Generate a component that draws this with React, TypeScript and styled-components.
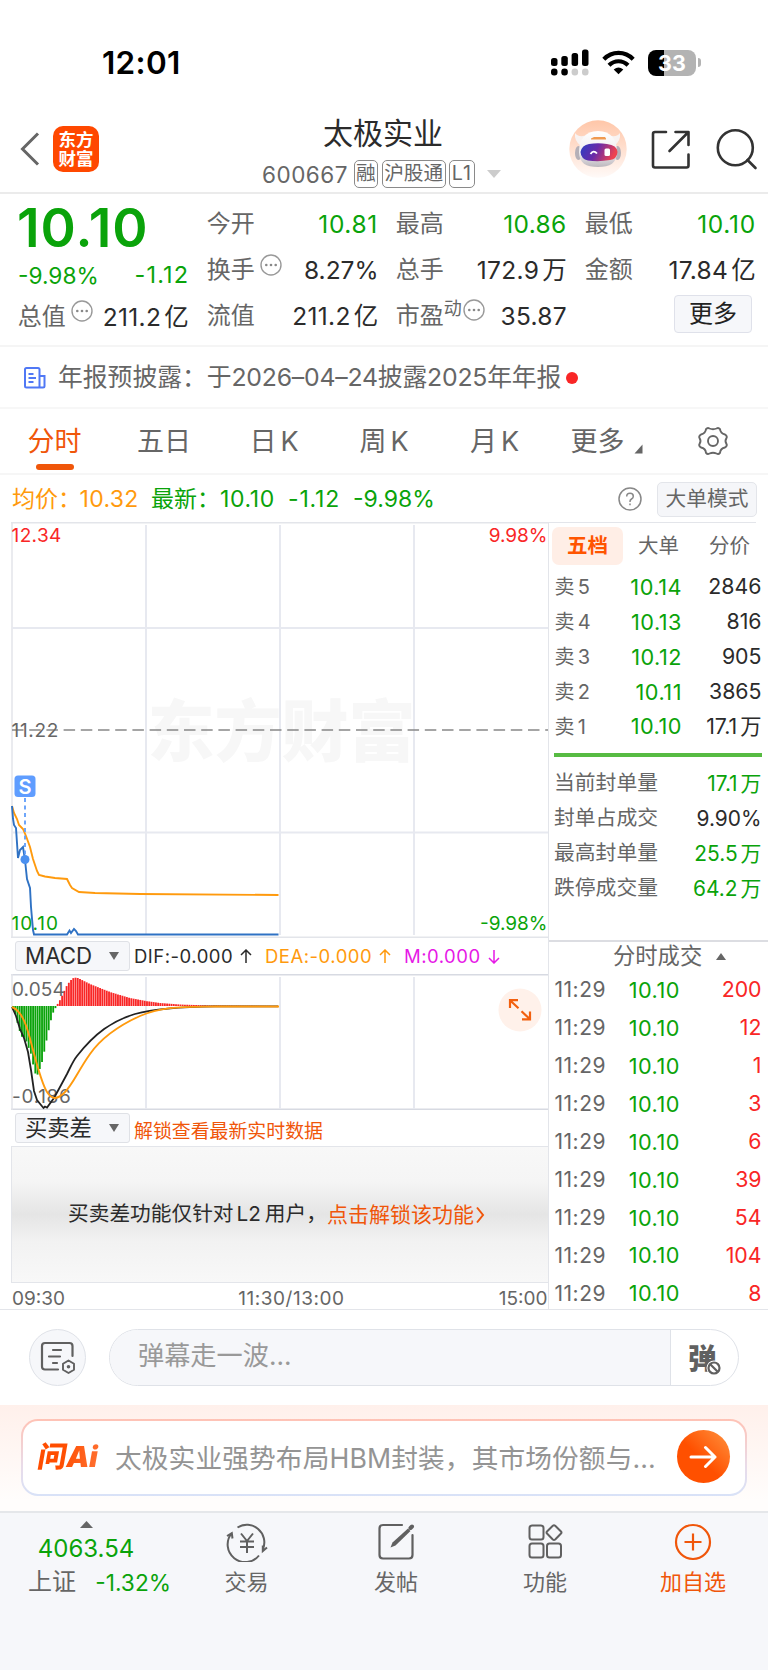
import React from "react";
import styled, { createGlobalStyle } from "styled-components";

const GREEN = "#0aa30a";
const RED = "#f92626";
const ORANGE = "#f0560a";
const AMBER = "#ff9a0d";
const DARK = "#2b2b2b";
const GRAY = "#666";
const LINE = "#e3e5ea";

const GlobalStyle = createGlobalStyle`
  * { box-sizing: border-box; }
  body { margin: 0; background: #fff; }
  body, text { font-family: Inter, "Noto Sans CJK SC", sans-serif; }
`;

const Page = styled.div`
  width: 768px;
  height: 1670px;
  overflow: hidden;
  background: #fff;
  color: ${GRAY};
  display: flex;
  flex-direction: column;
  white-space: nowrap;
`;

interface TxtProps {
  $size: number;
  $color?: string;
  $weight?: number;
  $ls?: number;
}
const Txt = styled.span<TxtProps>`
  font-size: ${(p) => p.$size}px;
  color: ${(p) => p.$color || GRAY};
  font-weight: ${(p) => p.$weight || 400};
  letter-spacing: ${(p) => p.$ls || 0}px;
  margin-right: ${(p) => -(p.$ls || 0)}px;
  line-height: 1.2;
`;
const Unit = styled.span`
  margin-left: 3px;
`;

/* status bar */
const StatusBar = styled.div`
  height: 100px;
  padding: 25px 67px 0 102px;
  display: flex;
  align-items: center;
  justify-content: space-between;
`;
const StatusIcons = styled.div`
  display: flex;
  align-items: center;
  gap: 13px;
`;
const Battery = styled.div`
  width: 48px;
  height: 26px;
  border-radius: 8px;
  background: linear-gradient(90deg, #000 34%, #b3b3b3 34%);
  color: #fff;
  font-size: 21.5px;
  font-weight: 700;
  line-height: 26px;
  text-align: center;
`;
const BatteryGroup = styled.div`
  display: flex;
  align-items: center;
  gap: 2px;
`;
const Nub = styled.div`
  width: 3px;
  height: 9px;
  border-radius: 0 4px 4px 0;
  background: #b3b3b3;
`;

/* title bar */
const Header = styled.header`
  height: 94px;
  border-bottom: 2px solid #ebebeb;
  display: grid;
  grid-template-columns: 262px 1fr 199px;
`;
const HeaderLeft = styled.div`
  display: flex;
  align-items: center;
  gap: 13.5px;
  padding: 6px 0 0 19.5px;
`;
const Logo = styled.div`
  width: 46px;
  height: 46px;
  border-radius: 10px;
  background: #ff4800;
  color: #fff;
  font-size: 17.5px;
  font-weight: 700;
  line-height: 19px;
  padding-top: 4px;
  text-align: center;
  white-space: normal;
`;
const TitleBlock = styled.div`
  display: flex;
  flex-direction: column;
  padding-top: 15px;
`;
const StockName = styled.div`
  font-size: 30px;
  line-height: 36px;
  color: ${DARK};
  padding-left: 61px;
`;
const CodeRow = styled.div`
  display: flex;
  align-items: center;
  gap: 3.5px;
  height: 28px;
  margin-top: 9px;
`;
const Code = styled.span`
  font-size: 22.5px;
  letter-spacing: 0.5px;
  width: 88px;
`;
const Tag = styled.span<{ $ls?: number }>`
  height: 28px;
  padding: 0 1.5px;
  border: 1.5px solid #8a8a8a;
  border-radius: 5px;
  font-size: 19.7px;
  line-height: 25px;
  letter-spacing: ${(p) => p.$ls || 0}px;
`;
const TagArrow = styled.span`
  display: flex;
  margin-left: 8.5px;
`;
const HeaderRight = styled.div`
  display: flex;
  align-items: center;
  padding: 6px 0 0 0;
`;

/* quotes */
const Quote = styled.section`
  height: 153px;
  padding: 7px 13px 0 18px;
  display: grid;
  grid-template-columns: repeat(4, 170px);
  column-gap: 19px;
  border-bottom: 2px solid #f5f5f5;
`;
const QuoteCol = styled.div`
  display: flex;
  flex-direction: column;
`;
const QuoteRow = styled.div<{ $h?: number }>`
  height: ${(p) => p.$h || 46}px;
  display: flex;
  align-items: center;
  justify-content: space-between;
`;
const Price = styled.div`
  height: 56px;
  margin-left: -1px;
  font-size: 53.5px;
  line-height: 53px;
  font-weight: 600;
  color: ${GREEN};
  letter-spacing: 1px;
`;
const Label = styled.span`
  display: flex;
  align-items: center;
  margin-left: -0.3px;
  font-size: 24px;
  color: ${GRAY};
  line-height: 30px;
`;
const Value = styled.span<{ $color?: string; $shift?: number; $ls?: number }>`
  font-size: 24.5px;
  letter-spacing: ${(p) => p.$ls ?? 0.3}px;
  line-height: 30px;
  margin-right: ${(p) => -(p.$shift || 0)}px;
  color: ${(p) => p.$color || DARK};
`;
const Sup = styled.span`
  font-size: 18px;
  line-height: 20px;
  margin-bottom: 14px;
`;
const MoreBtn = styled.button`
  width: 78px;
  height: 38px;
  margin: 0 3px 0 auto;
  padding: 0;
  border: 1.5px solid #dfe1ea;
  border-radius: 4px;
  background: #f6f7fa;
  font: 24px/36px Inter, "Noto Sans CJK SC", sans-serif;
  color: #222;
`;
const DotsWrap = styled.span<{ $ml: number }>`
  display: flex;
  margin: 0 0 11px ${(p) => p.$ml}px;
`;

const Notice = styled.div`
  height: 62px;
  padding: 1px 0 0 23px;
  display: flex;
  align-items: center;
  border-bottom: 2px solid #f7f7f7;
`;
const RedDot = styled.i`
  width: 12px;
  height: 12px;
  border-radius: 50%;
  background: ${RED};
  margin-left: 5px;
`;

/* period tabs */
const Tabs = styled.nav`
  height: 66px;
  border-bottom: 2px solid #f6f6f6;
  display: grid;
  grid-template-columns: 109px 110px 110px 110px 111px 108px 1fr;
`;
const Tab = styled.div<{ $on?: boolean }>`
  display: flex;
  flex-direction: column;
  align-items: center;
  padding-top: 16px;
  font-size: 27px;
  line-height: 34px;
  word-spacing: -3.5px;
  color: ${(p) => (p.$on ? ORANGE : GRAY)};
`;
const Underline = styled.i`
  width: 38px;
  height: 6px;
  margin-top: 5px;
  border-radius: 3px;
  background: ${ORANGE};
`;
const TabMore = styled.span`
  display: flex;
  align-items: flex-end;
  gap: 9px;
  padding-left: 5px;
`;

const Summary = styled.div`
  height: 47px;
  padding: 1px 11px 0 12px;
  display: flex;
  align-items: center;
`;
const SummaryText = styled.div`
  display: flex;
  flex: 1;
  align-items: baseline;
`;
const Cell = styled.span<{ $w: number; $color: string; $ls?: number }>`
  width: ${(p) => p.$w}px;
  color: ${(p) => p.$color};
  letter-spacing: ${(p) => p.$ls || 0}px;
  font-size: 23px;
  line-height: 30px;
`;
const ModeBtn = styled.div`
  width: 100px;
  height: 35px;
  margin-left: 15px;
  border: 1.5px solid ${LINE};
  border-radius: 5px;
  background: #f5f6f9;
  font-size: 20.7px;
  line-height: 32px;
  text-align: center;
`;

/* chart area */
const Main = styled.div`
  height: 788px;
  display: grid;
  grid-template-columns: 549px minmax(0, 1fr);
  grid-template-rows: 786.5px;
  border-bottom: 1.5px solid ${LINE};
`;
const Charts = styled.div`
  padding-left: 11px;
  border-right: 1.5px solid ${LINE};
  display: flex;
  flex-direction: column;
`;
const ChartSvg = styled.svg`
  display: block;
  flex: none;
`;
const IndicatorRow = styled.div`
  height: 36px;
  flex: none;
  padding-left: 4px;
  display: flex;
  align-items: center;
`;
const Picker = styled.div`
  width: 115px;
  height: 30px;
  margin-right: 4px;
  padding: 0 10px 0 9px;
  display: flex;
  align-items: center;
  justify-content: space-between;
  border: 1.5px solid #dfe1e6;
  border-radius: 3px;
  background: #f6f7fa;
  color: ${DARK};
  font-size: 22.3px;
  line-height: 26px;
`;
const Readout = styled.span<{ $w: number; $color: string }>`
  width: ${(p) => p.$w}px;
  display: flex;
  align-items: center;
  gap: 7px;
  color: ${(p) => p.$color};
  font-size: 18.5px;
  letter-spacing: 0.5px;
`;
const UnlockNote = styled.span`
  padding-top: 2px;
  font-size: 18.9px;
  color: ${ORANGE};
`;
const Locked = styled.div`
  height: 137px;
  flex: none;
  border: solid ${LINE};
  border-width: 1.5px 0 1.5px 1.5px;
  padding: 0 0 0 56px;
  display: flex;
  align-items: center;
  background: linear-gradient(180deg, #f8f8f8 0%, #f5f5f5 25%, #e5e5e5 50%, #f2f2f2 70%, #f8f8f8 100%);
`;
const InlineGap = styled.span`
  margin: 0 4px 0 3px;
`;
const TimeAxis = styled.div`
  flex: 1;
  display: flex;
  align-items: center;
  justify-content: space-between;
  font-size: 19px;
  padding: 4px 0.5px 0 1px;
`;
const MidTime = styled.span`
  padding-left: 19px;
  letter-spacing: 0.55px;
`;

/* order book */
const Side = styled.aside`
  display: flex;
  flex-direction: column;
`;
const SideTabs = styled.div`
  height: 47.5px;
  flex: none;
  margin-right: 12px;
  padding: 4px 0 0 3px;
  border-top: 1.5px solid ${LINE};
  display: flex;
`;
const SideTab = styled.div<{ $on?: boolean }>`
  width: 71px;
  height: 38px;
  flex: none;
  border-radius: 7px;
  background: ${(p) => (p.$on ? "#ffeee6" : "none")};
  color: ${(p) => (p.$on ? "#ff5500" : GRAY)};
  font-weight: ${(p) => (p.$on ? 700 : 400)};
  font-size: 20.5px;
  line-height: 37px;
  text-align: center;
`;
const Row = styled.div<{ $h: number; $pl?: number }>`
  height: ${(p) => p.$h}px;
  flex: none;
  padding: 0 6.5px 0 5.5px;
  display: grid;
  grid-template-columns: ${(p) => p.$pl || 127}px 1fr;
  align-items: center;
  justify-items: end;
  word-spacing: -2.5px;
`;
const RowLeft = styled.div`
  width: 100%;
  display: flex;
  align-items: center;
  justify-content: space-between;
`;
const StatRow = styled.div`
  height: 35px;
  flex: none;
  padding: 0 6.5px 0 5px;
  display: flex;
  align-items: center;
  justify-content: space-between;
`;
const GreenBar = styled.div`
  height: 4px;
  flex: none;
  margin: 9.5px 6px 8.5px 5px;
  background: #57bb42;
`;
const TradesHead = styled.div`
  height: 31px;
  flex: none;
  margin-top: 34px;
  padding-left: 64px;
  display: flex;
  align-items: center;
  gap: 14px;
  border-top: 2px solid #dcdde2;
`;

/* comment bar */
const Danmu = styled.div`
  height: 95px;
  padding: 0 29px;
  display: flex;
  align-items: center;
  gap: 23px;
`;
const RoundBtn = styled.div`
  width: 57px;
  height: 57px;
  border: 1.5px solid #dfe2e8;
  border-radius: 50%;
  background: #f6f7fa;
  display: flex;
  align-items: center;
  justify-content: center;
`;
const InputBox = styled.div`
  width: 630px;
  height: 57px;
  border: 1.5px solid #dfe2e8;
  border-radius: 29px;
  overflow: hidden;
  display: flex;
`;
const Placeholder = styled.div`
  width: 561px;
  padding-left: 28px;
  background: #f6f7fa;
  border-right: 1.5px solid #dfe2e8;
  color: #999;
  font-size: 26.2px;
  line-height: 52px;
`;
const DanToggle = styled.div`
  position: relative;
  padding-left: 17px;
  color: #606060;
  font-size: 28.5px;
  font-weight: 900;
  line-height: 57px;
`;
const Ban = styled.svg`
  position: absolute;
  left: 35px;
  top: 30px;
`;

/* AI prompt */
const AiSection = styled.div`
  height: 106px;
  padding: 14px 21px 0;
  background: linear-gradient(180deg, #fff0eb, #fffdfc 90%);
`;
const AiCard = styled.div`
  height: 77px;
  padding: 0 15.5px 2px 16px;
  border: 2.5px solid transparent;
  border-radius: 17px;
  background:
    linear-gradient(#fff, #fff) padding-box,
    linear-gradient(180deg, #ffc2b5, #e9dbe8 60%, #d8e2f8) border-box;
  display: flex;
  align-items: center;
`;
const AiLogo = styled.div`
  width: 76px;
  margin-left: -1px;
  padding-right: 1px;
  font-size: 29px;
  font-weight: 900;
  letter-spacing: -0.3px;
  transform: skewX(-10deg);
  line-height: 40px;
  background: linear-gradient(90deg, #ff4d00 30%, #ff8148 80px);
  background-clip: text;
  -webkit-background-clip: text;
  color: transparent;
`;
const AiText = styled.div`
  flex: 1;
  padding-left: 1px;
  color: #949494;
  font-size: 26.7px;
  letter-spacing: 0.12px;
`;
const Go = styled.div`
  width: 53px;
  height: 53px;
  flex: none;
  border-radius: 50%;
  background: linear-gradient(45deg, #ff5000 45%, #ff9440);
  display: flex;
  align-items: center;
  justify-content: center;
`;

/* bottom bar */
const Footer = styled.footer`
  flex: 1;
  background: #f6f7fa;
  border-top: 2px solid #e5e7ea;
  display: grid;
  grid-template-columns: 172px 149px 150px 148px 1fr;
  padding-right: 1px;
`;
const IndexBlock = styled.div`
  display: flex;
  flex-direction: column;
  align-items: center;
  padding-top: 7.5px;
`;
const IndexValue = styled.div`
  font-size: 24px;
  line-height: 30px;
  margin-top: 6px;
  color: ${GREEN};
`;
const IndexLine = styled.div`
  width: 143px;
  display: flex;
  align-items: center;
  justify-content: space-between;
  height: 38px;
  margin-left: 27px;
`;
const Nav = styled.div<{ $color?: string }>`
  display: flex;
  flex-direction: column;
  align-items: center;
  padding-top: 9px;
  font-size: 22px;
  line-height: 30px;
  gap: 5px;
  color: ${(p) => p.$color || GRAY};
`;

/* a figure followed by its CJK unit, with a narrow gap between them */
const Amount = ({ text }: { text: string }) => {
  const m = text.match(/^(.*?)([亿万])$/);
  return m ? (
    <>
      {m[1]}
      <Unit>{m[2]}</Unit>
    </>
  ) : (
    <>{text}</>
  );
};

const Dots = ({ ml }: { ml: number }) => (
  <DotsWrap $ml={ml}>
    <svg width="22" height="22" viewBox="0 0 22 22" fill="none" stroke="#999" strokeWidth="1.4">
      <circle cx="11" cy="11" r="10" />
      <g fill="#888" stroke="none">
        <circle cx="6.3" cy="11" r="1.3" />
        <circle cx="11" cy="11" r="1.3" />
        <circle cx="15.7" cy="11" r="1.3" />
      </g>
    </svg>
  </DotsWrap>
);

const Tri = ({ up, w = 10, h = 8, c = GRAY }: { up?: boolean; w?: number; h?: number; c?: string }) => (
  <svg width={w} height={h} viewBox="0 0 10 8" preserveAspectRatio="none">
    <path d={up ? "M0 8L5 0L10 8Z" : "M0 0H10L5 8Z"} fill={c} />
  </svg>
);

const Arrow = ({ down }: { down?: boolean }) => (
  <svg width="12" height="15" viewBox="0 0 12 15" fill="none" stroke="currentColor" strokeWidth="1.5">
    <path d={down ? "M6 1V14M1 9L6 14L11 9" : "M6 14V1M1 6L6 1L11 6"} />
  </svg>
);

const Robot = () => (
  <svg width="58" height="58" viewBox="0 0 58 58">
    <defs>
      <linearGradient id="halo" x1="0" y1="0" x2="0" y2="1">
        <stop offset="0" stopColor="#ffc6a8" />
        <stop offset="0.6" stopColor="#ffe5d8" />
        <stop offset="1" stopColor="#fffaf8" />
      </linearGradient>
      <linearGradient id="visor" x1="0" y1="0" x2="1" y2="0.25">
        <stop offset="0" stopColor="#2a3fc4" />
        <stop offset="0.5" stopColor="#6a2aa8" />
        <stop offset="1" stopColor="#ee4250" />
      </linearGradient>
      <linearGradient id="helmet" x1="0" y1="0" x2="0" y2="1">
        <stop offset="0" stopColor="#fff" />
        <stop offset="0.6" stopColor="#efedf0" />
        <stop offset="1" stopColor="#bdb8be" />
      </linearGradient>
    </defs>
    <circle cx="29" cy="29" r="28.7" fill="url(#halo)" />
    <path d="M6 13Q5 21 12 26L19 15Q9 18 6 13ZM51 13Q52 21 45 26L38 15Q48 18 51 13Z" fill="#f8f3f2" />
    <ellipse cx="9.5" cy="33" rx="3.5" ry="7" fill="#b5b0b8" />
    <ellipse cx="48.5" cy="33" rx="3.5" ry="7" fill="#b5b0b8" />
    <path d="M29 11C42 11 48 20 48 32C48 43 41 47 29 47C17 47 10 43 10 32C10 20 16 11 29 11Z" fill="url(#helmet)" />
    <path d="M22 18.5L25 17H36L37 18.5V19.5H22Z" fill="#f09a50" />
    <path d="M20 24Q29 22.500 38 24Q48 25 48.500 32Q48 39 41 40Q30 42 19 40.500Q12 39 11.500 32Q13 25 20 24Z" fill="url(#visor)" />
    <path d="M21.500 34Q24.500 29.500 28 33.500" fill="none" stroke="#fff" strokeWidth="1.8" />
    <rect x="35.500" y="28.500" width="5.500" height="7.500" rx="1.500" fill="#fff" />
  </svg>
);

const deltaPoints: [number, number][] = [
  [12, 1008], [15, 1013], [18, 1025], [20, 1032], [22, 1037], [25, 1038], [27, 1043], [29, 1049], [31, 1054],
  [33, 1064], [35, 1073], [37, 1076], [39, 1071], [41, 1066], [43, 1058], [45, 1048], [47, 1038], [49, 1029],
  [51, 1020], [53, 1013], [56, 1007], [57, 1005], [60, 1000], [63, 994], [66, 987], [70, 981], [74, 977.5],
  [78, 978], [82, 980], [90, 984], [100, 988], [110, 992], [120, 995], [130, 998], [146, 1001], [160, 1003],
  [180, 1004.500], [210, 1005.500], [279, 1006],
];
const barAt = (x: number) => {
  for (let i = 1; i < deltaPoints.length; i++) {
    const [x0, y0] = deltaPoints[i - 1];
    const [x1, y1] = deltaPoints[i];
    if (x <= x1) return y0 + ((y1 - y0) * (x - x0)) / (x1 - x0);
  }
  return 1006;
};
const bars = Array.from({ length: 119 }, (_, i) => {
  const x = 13 + i * 2.233;
  return { x, y: barAt(x) };
});

const asks = [
  ["5", "10.14", "2846"],
  ["4", "10.13", "816"],
  ["3", "10.12", "905"],
  ["2", "10.11", "3865"],
  ["1", "10.10", "17.1万"],
];
const stats = [
  ["当前封单量", "17.1万", GREEN],
  ["封单占成交", "9.90%", DARK],
  ["最高封单量", "25.5万", GREEN],
  ["跌停成交量", "64.2万", GREEN],
];
const trades = ["200", "12", "1", "3", "6", "39", "54", "104", "8"];

const PriceChart = () => (
  <ChartSvg width="537" height="416" viewBox="11 522 537 416" fill="none">
    <text x="147.500" y="755.500" fontSize="67" fontWeight="900" fill="#f7f7f7">东方财富</text>
    <g stroke="#e7e9f0" strokeWidth="1.5">
      <path d="M11 522.700H548M11 937.300H548" stroke={LINE} />
      <path d="M12 522V938" stroke={LINE} />
      <path d="M146 525V935M280 525V935M414 525V935" strokeWidth="2" />
      <path d="M12 628H548M12 832.500H548" strokeWidth="1.8" />
    </g>
    <path d="M12 730H548" stroke="#888" strokeWidth="1.700" strokeDasharray="11.500 5.700" />
    <g fontSize="19">
      <text x="11.500" y="541.500" fill={RED} letterSpacing="0.400">12.34</text>
      <text x="547.500" y="541.500" fill={RED} textAnchor="end">9.98%</text>
      <text x="11.500" y="736.500" fill={GRAY} letterSpacing="0.700">11.22</text>
      <text x="11.500" y="930" fill={GREEN} letterSpacing="0.900">10.10</text>
      <text x="547.500" y="930" fill={GREEN} textAnchor="end">-9.98%</text>
    </g>
    <path d="M12 806L14 813L17 819L19 825L23 829L26 836L30 847L33 859L37 871L39 875L45 876.500L55 878L67 879L70 885L72 888L79 892L95 893L140 894L278.500 895" stroke={AMBER} strokeWidth="1.900" />
    <path d="M12 806L13 819L14 825L16 828L18 858L20 850L23 847L25 860L27 879L30 888L31 907L33 930L34 934.500L67 934.500L69.500 930.500L71 933L74 929L76 931L78 934.500H278.500" stroke="#2f72c4" strokeWidth="1.900" />
    <path d="M25 798V856" stroke="#5f9dfa" strokeWidth="1.800" strokeDasharray="4 3.500" />
    <circle cx="25" cy="859.500" r="4.500" fill="#4a90f0" />
    <rect x="14.500" y="775.500" width="21" height="21.500" rx="3.500" fill="#5f9dff" />
    <text x="25" y="793.500" fontSize="20" fontWeight="600" fill="#fff" textAnchor="middle">S</text>
  </ChartSvg>
);

const MacdChart = () => (
  <ChartSvg width="537" height="136" viewBox="11 974 537 136" fill="none">
    <path d="M11 974.700H548M11 1109.300H548" stroke="#d7dae2" strokeWidth="1.500" />
    <path d="M12 974V1110" stroke={LINE} strokeWidth="1.500" />
    <path d="M146 977V1109M280 977V1109M414 977V1109" stroke="#e7e9f0" strokeWidth="2" />
    {bars.map((b) => (
      <path key={b.x} d={`M${b.x} 1006V${b.y}`} stroke={b.y > 1006 ? "#0aa30a" : RED} strokeWidth="1.850" />
    ))}
    <text x="12" y="995.500" fontSize="19" fill={GRAY} letterSpacing="0.100">0.054</text>
    <text x="12" y="1102.500" fontSize="19" fill={GRAY} letterSpacing="0.700">-0.186</text>
    <path d="M12 1007L16 1016L20 1029L24 1038L28 1052L31 1070L34 1091L37 1100L41 1105L43.500 1108L45 1106.500L47 1107.500L54 1098L60 1087L67 1074C71 1066 73 1061 77 1056C95 1033 112 1021 135 1014C155 1008.500 180 1006.700 215 1006.300H278" stroke="#222" strokeWidth="1.800" />
    <path d="M12 1007C24 1012 28 1031 33 1050S42 1084 47 1092S57 1100 65 1092S78 1071 90 1054S118 1026 140 1016S185 1007 215 1006.500H279" stroke={AMBER} strokeWidth="1.900" />
    <circle cx="520" cy="1010" r="21.500" fill="#fff1ea" />
    <path d="M510 1008V1000.200H518M510.500 1000.700L518.500 1008.200M530 1011.500V1019.300H522M529.500 1018.800L521.500 1011.300" stroke="#f2600f" strokeWidth="2.200" />
  </ChartSvg>
);

export default function App() {
  return (
    <Page>
      <GlobalStyle />
      <StatusBar>
        <Txt $size={31.500} $color="#000" $weight={600} $ls={0.300}>12:01</Txt>
        <StatusIcons>
          <svg width="38" height="27" viewBox="0 0 38 27">
            <g fill="#000">
              <rect x="0" y="9" width="6.500" height="8" rx="2.500" />
              <rect x="10.300" y="7" width="6.500" height="10" rx="2.500" />
              <rect x="20.600" y="4" width="6.500" height="13" rx="2.500" />
              <rect x="31" y="0.500" width="6.500" height="16.500" rx="2.500" />
              <rect x="0" y="19.500" width="6.500" height="7" rx="3" />
              <rect x="10.300" y="19.500" width="6.500" height="7" rx="3" />
            </g>
            <rect x="20.600" y="19.500" width="6.500" height="7" rx="3" fill="#ccc" />
            <rect x="31" y="19.500" width="6.500" height="7" rx="3" fill="#ccc" />
          </svg>
          <svg width="33" height="25" viewBox="0 0 33 25" fill="none" stroke="#000" strokeWidth="4.200">
            <path d="M1.800 9.200C10 0.800 23 0.800 31.200 9.200" />
            <path d="M7 15.200C12.500 9.900 20.500 9.900 26 15.200" />
            <path d="M11.700 19.500Q16.500 15.500 21.300 19.500L16.500 24.300Z" fill="#000" stroke="none" />
          </svg>
          <BatteryGroup>
            <Battery>33</Battery>
            <Nub />
          </BatteryGroup>
        </StatusIcons>
      </StatusBar>

      <Header>
        <HeaderLeft>
          <svg width="20" height="34" viewBox="0 0 20 34" fill="none" stroke="#666" strokeWidth="3">
            <path d="M18 1.500L2.500 17L18 32.500" />
          </svg>
          <Logo>东方<br />财富</Logo>
        </HeaderLeft>
        <TitleBlock>
          <StockName>太极实业</StockName>
          <CodeRow>
            <Code>600667</Code>
            <Tag>融</Tag>
            <Tag>沪股通</Tag>
            <Tag $ls={1}>L1</Tag>
            <TagArrow><Tri w={14} h={8} c="#ccc" /></TagArrow>
          </CodeRow>
        </TitleBlock>
        <HeaderRight>
          <Robot />
          <svg width="141" height="58" viewBox="627 120 141 58" fill="none" stroke="#333" strokeWidth="2.600" strokeLinecap="round" strokeLinejoin="round">
            <path d="M666 132H655Q653 132 653 134V165.500Q653 167.500 655 167.500H686.500Q688.500 167.500 688.500 165.500V154.500M675.500 132H688.500V145M688 132.500L669.500 151" />
            <circle cx="735.300" cy="147.800" r="17.500" />
            <path d="M747.500 160L755.500 168" />
          </svg>
        </HeaderRight>
      </Header>

      <Quote>
        <QuoteCol>
          <Price>10.10</Price>
          <QuoteRow $h={37}>
            <Txt $size={22.700} $color={GREEN}>-9.98%</Txt>
            <Txt $size={23.500} $color={GREEN} $ls={1.100}>-1.12</Txt>
          </QuoteRow>
          <QuoteRow $h={45}>
            <Label>总值<Dots ml={5} /></Label>
            <Value $shift={1}><Amount text="211.2亿" /></Value>
          </QuoteRow>
        </QuoteCol>
        <QuoteCol>
          <QuoteRow>
            <Label>今开</Label>
            <Value $color={GREEN} $shift={0.800} $ls={0.600}>10.81</Value>
          </QuoteRow>
          <QuoteRow>
            <Label>换手<Dots ml={5} /></Label>
            <Value $shift={1.500} $ls={0}>8.27%</Value>
          </QuoteRow>
          <QuoteRow $h={45}>
            <Label>流值</Label>
            <Value $shift={1.500}><Amount text="211.2亿" /></Value>
          </QuoteRow>
        </QuoteCol>
        <QuoteCol>
          <QuoteRow>
            <Label>最高</Label>
            <Value $color={GREEN} $shift={0.500}>10.86</Value>
          </QuoteRow>
          <QuoteRow>
            <Label>总手</Label>
            <Value $shift={1}><Amount text="172.9万" /></Value>
          </QuoteRow>
          <QuoteRow $h={45}>
            <Label>市盈<Sup>动</Sup><Dots ml={1} /></Label>
            <Value $shift={1}>35.87</Value>
          </QuoteRow>
        </QuoteCol>
        <QuoteCol>
          <QuoteRow>
            <Label>最低</Label>
            <Value $color={GREEN} $shift={0.800} $ls={0.700}>10.10</Value>
          </QuoteRow>
          <QuoteRow>
            <Label>金额</Label>
            <Value $shift={1}><Amount text="17.84亿" /></Value>
          </QuoteRow>
          <QuoteRow $h={42}>
            <MoreBtn>更多</MoreBtn>
          </QuoteRow>
        </QuoteCol>
      </Quote>

      <Notice>
        <svg width="35" height="24" viewBox="0 0 35 24" fill="none" stroke="#5078f5" strokeWidth="2">
          <path d="M16.500 21.500H3.500Q2 21.500 2 20V3.500Q2 2 3.500 2H15Q16.500 2 16.500 3.500V21.500H20Q21.500 21.500 21.500 20V10H16.500M5.500 8H10.500M5.500 12H13M5.500 16H10.500" />
        </svg>
        <Txt $size={24.800}>年报预披露：</Txt>
        <Txt $size={24.800} $ls={-0.200}>于2026–04–24披露2025年年报</Txt>
        <RedDot />
      </Notice>

      <Tabs>
        <Tab $on>分时<Underline /></Tab>
        <Tab>五日</Tab>
        <Tab>日 K</Tab>
        <Tab>周 K</Tab>
        <Tab>月 K</Tab>
        <Tab>
          <TabMore>
            更多
            <svg width="9" height="15" viewBox="0 0 9 15"><path d="M0.500 9.500L8.500 0.500V9.500Z" fill="#666" /></svg>
          </TabMore>
        </Tab>
        <Tab>
          <svg width="32" height="32" viewBox="0 0 32 32" fill="none" stroke="#666" strokeWidth="1.900" strokeLinejoin="round">
            <path d="M12.500 3.500Q16 5 19.500 3.500Q21.500 2.300 23 4.200Q23.500 8.500 28 9.500Q30.500 11 29.500 13Q27.500 16 29.500 19Q30.500 21 28 22.500Q23.500 23.500 23 27.800Q21.500 29.700 19.500 28.500Q16 27 12.500 28.500Q10.500 29.700 9 27.800Q8.500 23.500 4 22.500Q1.500 21 2.500 19Q4.500 16 2.500 13Q1.500 11 4 9.500Q8.500 8.500 9 4.200Q10.500 2.300 12.500 3.500Z" />
            <circle cx="16" cy="16" r="5" />
          </svg>
        </Tab>
      </Tabs>

      <Summary>
        <SummaryText>
          <Cell $w={67.500} $color={AMBER}>均价：</Cell>
          <Cell $w={71.500} $color={AMBER} $ls={0.300}>10.32</Cell>
          <Cell $w={69} $color={GREEN}>最新：</Cell>
          <Cell $w={68} $color={GREEN} $ls={0.600}>10.10</Cell>
          <Cell $w={65} $color={GREEN} $ls={0.800}>-1.12</Cell>
          <Cell $w={90} $color={GREEN}>-9.98%</Cell>
        </SummaryText>
        <svg width="24" height="24" viewBox="0 0 24 24" fill="none" stroke="#888" strokeWidth="1.500">
          <circle cx="12" cy="12" r="11" />
          <path d="M8.700 9.500Q8.700 6.300 12 6.300T15.300 9.300Q15.300 11 13.500 12T12 15M12 16.500V18.300" />
        </svg>
        <ModeBtn>大单模式</ModeBtn>
      </Summary>

      <Main>
        <Charts>
          <PriceChart />
          <IndicatorRow>
            <Picker>MACD<Tri /></Picker>
            <Readout $w={131} $color={DARK}>DIF:-0.000<Arrow /></Readout>
            <Readout $w={139} $color={AMBER}>DEA:-0.000<Arrow /></Readout>
            <Readout $w={110} $color="#e619e6">M:0.000<Arrow down /></Readout>
          </IndicatorRow>
          <MacdChart />
          <IndicatorRow>
            <Picker>买卖差<Tri /></Picker>
            <UnlockNote>解锁查看最新实时数据</UnlockNote>
          </IndicatorRow>
          <Locked>
            <Txt $size={20.700} $color={DARK}>买卖差功能仅针对<InlineGap>L2</InlineGap>用户，</Txt>
            <Txt $size={21} $color={ORANGE}>点击解锁该功能</Txt>
            <svg width="11" height="18" viewBox="0 0 11 18" fill="none" stroke={ORANGE} strokeWidth="2"><path d="M3 1.500L9 9L3 16.500" /></svg>
          </Locked>
          <TimeAxis>
            <span>09:30</span>
            <MidTime>11:30/13:00</MidTime>
            <span>15:00</span>
          </TimeAxis>
        </Charts>

        <Side>
          <SideTabs>
            <SideTab $on>五档</SideTab>
            <SideTab>大单</SideTab>
            <SideTab>分价</SideTab>
          </SideTabs>
          {asks.map(([n, price, vol]) => (
            <Row key={n} $h={34.900}>
              <RowLeft>
                <Txt $size={20}>卖 {n}</Txt>
                <Txt $size={21.700} $color={GREEN} $ls={0.500}>{price}</Txt>
              </RowLeft>
              <Txt $size={21.300} $color={DARK}><Amount text={vol} /></Txt>
            </Row>
          ))}
          <GreenBar />
          {stats.map(([label, value, color]) => (
            <StatRow key={label}>
              <Txt $size={20.800}>{label}</Txt>
              <Txt $size={20.900} $color={color}><Amount text={value} /></Txt>
            </StatRow>
          ))}
          <TradesHead>
            <Txt $size={22.300}>分时成交</Txt>
            <Tri up w={10} h={7} />
          </TradesHead>
          {trades.map((vol, i) => (
            <Row key={i} $h={37.950} $pl={125}>
              <RowLeft>
                <Txt $size={21} $ls={0.500}>11:29</Txt>
                <Txt $size={21.700} $color={GREEN} $ls={0.500}>10.10</Txt>
              </RowLeft>
              <Txt $size={21.300} $color={RED}>{vol}</Txt>
            </Row>
          ))}
        </Side>
      </Main>

      <Danmu>
        <RoundBtn>
          <svg width="36" height="34" viewBox="0 0 36 34" fill="none" stroke="#606060" strokeWidth="2.200" strokeLinecap="round">
            <path d="M18 28.500H5Q2 28.500 2 25.500V5Q2 2 5 2H29.500Q32.500 2 32.500 5V15M13 9H21M9 15.500H20M13 22H17" />
            <path d="M28.500 19.500L34 22.800V28.700L28.500 32L23 28.700V22.800Z" strokeWidth="1.900" strokeLinejoin="round" />
            <circle cx="28.500" cy="25.800" r="1.800" fill="#606060" stroke="none" />
          </svg>
        </RoundBtn>
        <InputBox>
          <Placeholder>弹幕走一波...</Placeholder>
          <DanToggle>
            弹
            <Ban width="16" height="16" viewBox="0 0 16 16">
              <circle cx="8" cy="8" r="7.500" fill="#fff" />
              <circle cx="8" cy="8" r="5.500" fill="#fff" stroke="#606060" strokeWidth="2.200" />
              <path d="M4.500 4.500L11.500 11.500" stroke="#606060" strokeWidth="2.200" />
            </Ban>
          </DanToggle>
        </InputBox>
      </Danmu>

      <AiSection>
        <AiCard>
          <AiLogo>问Ai</AiLogo>
          <AiText>太极实业强势布局HBM封装，其市场份额与...</AiText>
          <Go>
            <svg width="28" height="24" viewBox="0 0 28 24" fill="none" stroke="#fff" strokeWidth="3" strokeLinecap="round" strokeLinejoin="round">
              <path d="M2 12H26M16.500 2.500L26 12L16.500 21.500" />
            </svg>
          </Go>
        </AiCard>
      </AiSection>

      <Footer>
        <IndexBlock>
          <Tri up w={13} h={7} />
          <IndexValue>4063.54</IndexValue>
          <IndexLine>
            <Txt $size={24}>上证</Txt>
            <Txt $size={22.700} $color={GREEN}>-1.32%</Txt>
          </IndexLine>
        </IndexBlock>
        <Nav>
          <svg width="42" height="40" viewBox="0 0 42 40" fill="none" stroke="#606060" strokeWidth="2">
            <path d="M11.500 5.500A17.500 17.500 0 0 1 37 27M41 25.500L36.800 29V23.500M33 33.500A17.500 17.500 0 0 1 5.500 11.500M1 14L5.800 11.200L6.500 16.500" />
            <path d="M15 11.500L21 19L27 11.500M21 19V31M14 19.500H28M14 25H28" />
          </svg>
          交易
        </Nav>
        <Nav>
          <svg width="38" height="40" viewBox="0 0 38 40" fill="none" stroke="#606060" strokeWidth="2.200" strokeLinecap="round">
            <path d="M25 3H6Q2.500 3 2.500 6.500V33Q2.500 36.500 6 36.500H32Q35.500 36.500 35.500 33V13" />
            <path d="M31 6.500L15.500 20.500L13.500 25.500L18.500 23.500L33.500 9Z" fill="#606060" stroke="none" />
            <path d="M33.500 6L35 4.500" strokeWidth="4" />
          </svg>
          发帖
        </Nav>
        <Nav>
          <svg width="36" height="40" viewBox="0 0 36 40" fill="none" stroke="#606060" strokeWidth="2">
            <rect x="2.500" y="3.500" width="14" height="14" rx="2.500" />
            <rect x="2.500" y="21.500" width="14" height="14" rx="2.500" />
            <rect x="20" y="21.500" width="14" height="14" rx="2.500" />
            <path d="M25.800 3.800Q27 2.800 28.200 3.800L34 9.500Q35 10.500 34 11.500L28.200 17.500Q27 18.500 25.800 17.500L20 11.500Q19 10.500 20 9.500Z" />
          </svg>
          功能
        </Nav>
        <Nav $color={ORANGE}>
          <svg width="38" height="40" viewBox="0 0 38 40" fill="none" stroke={ORANGE} strokeWidth="2.200">
            <circle cx="19" cy="20" r="17" />
            <path d="M19 11.500V28.500M10.500 20H27.500" />
          </svg>
          加自选
        </Nav>
      </Footer>
    </Page>
  );
}
